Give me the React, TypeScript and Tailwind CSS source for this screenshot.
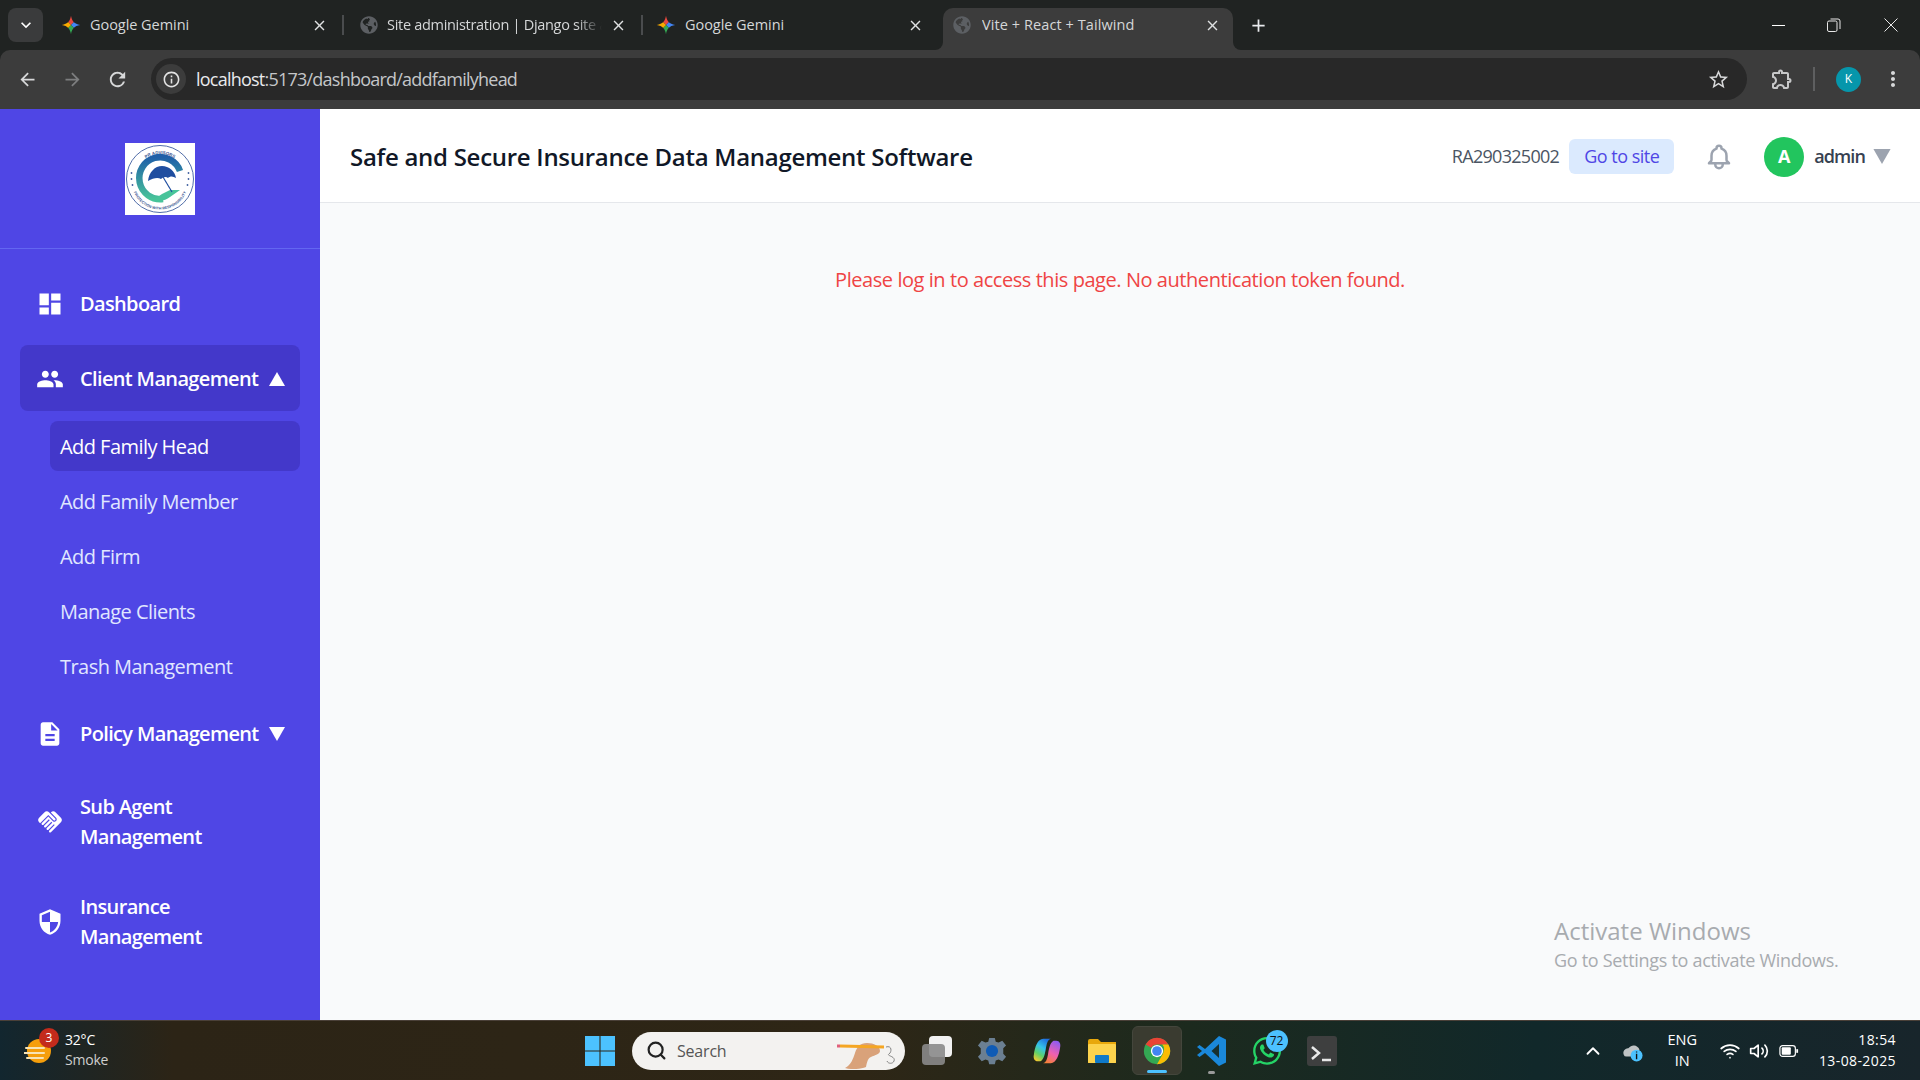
import { FaGlobeAmericas, FaWhatsapp } from 'react-icons/fa'
import {
  MdArrowBack,
  MdArrowForward,
  MdClose,
  MdDashboard,
  MdDescription,
  MdOutlineExtension,
  MdHandshake,
  MdInfoOutline,
  MdKeyboardArrowDown,
  MdMoreVert,
  MdOutlineStarBorder,
  MdPeople,
  MdRefresh,
  MdSecurity,
  MdAdd,
} from 'react-icons/md'
import { HiOutlineBell } from 'react-icons/hi'
import { FiSearch, FiChevronUp, FiWifi, FiVolume2 } from 'react-icons/fi'

const sans = 'font-["Open_Sans",sans-serif]'

const GeminiStar = ({ id }: { id: string }) => (
  <svg viewBox="0 0 24 24" className="h-5 w-5 shrink-0">
    <defs>
      <clipPath id={id}>
        <path d="M12 1c1 6 4 10 11 11-7 1-10 5-11 11-1-6-4-10-11-11 7-1 10-5 11-11z" />
      </clipPath>
    </defs>
    <g clipPath={`url(#${id})`}>
      <path d="M12 12L0 0h24z" fill="#e8483f" />
      <path d="M12 12L24 0v24z" fill="#4285f4" />
      <path d="M12 12l12 12H0z" fill="#34a853" />
      <path d="M12 12L0 24V0z" fill="#f9ab00" />
    </g>
  </svg>
)

const Globe = () => <FaGlobeAmericas className="h-[18px] w-[18px] shrink-0 text-[#5c5f63]" />

type TabProps = { icon: React.ReactNode; title: string; fade?: boolean; className: string; titleClass?: string }

const Tab = ({ icon, title, fade, className, titleClass = 'ml-[9px] tracking-[-0.05px]' }: TabProps) => (
  <div className={`flex h-full items-center pb-2 ${className}`}>
    {icon}
    <span className={`flex-1 overflow-hidden whitespace-nowrap text-[14.5px] text-[#d5d7d8] ${titleClass} ${fade ? '[mask-image:linear-gradient(to_right,black_88%,transparent)]' : ''}`}>
      {title}
    </span>
    <MdClose className="ml-2 h-[17px] w-[17px] shrink-0 text-[#dfe1e2]" />
  </div>
)

const ChromeBar = () => (
  <>
    <div className="flex h-[50px] items-end bg-[#202322] pl-2">
      <div className="mb-2 flex h-[34px] w-[35px] items-center justify-center rounded-lg bg-[#3a3b3c]">
        <MdKeyboardArrowDown className="h-5 w-5 text-white" />
      </div>
      <div className="flex h-[42px] items-center">
        <div className="ml-[2px] h-full">
          <Tab icon={<GeminiStar id="g1" />} title="Google Gemini" className="w-[297px] pl-4 pr-[14px]" />
        </div>
        <div className="mb-2 h-5 w-[2px] bg-[#4a4c4e]" />
        <Tab icon={<Globe />} title="Site administration | Django site admin" titleClass="ml-[9px] tracking-[-0.3px]" fade className="w-[297px] pl-4 pr-[14px]" />
        <div className="mb-2 h-5 w-[2px] bg-[#4a4c4e]" />
        <Tab icon={<GeminiStar id="g2" />} title="Google Gemini" className="w-[300px] pl-[13px] pr-[19px]" />
        <div className="relative h-full w-[290px] rounded-t-[10px] bg-[#3c3c3c]">
          <span className="absolute -left-2 bottom-0 h-2 w-2 bg-[#3c3c3c]">
            <span className="block h-full w-full rounded-br-lg bg-[#202322]" />
          </span>
          <span className="absolute -right-2 bottom-0 h-2 w-2 bg-[#3c3c3c]">
            <span className="block h-full w-full rounded-bl-lg bg-[#202322]" />
          </span>
          <Tab icon={<Globe />} title="Vite + React + Tailwind" titleClass="ml-[11px] tracking-[0.08px]" className="w-full pl-[10px] pr-[12px]" />
        </div>
        <MdAdd className="mb-2 ml-[15px] h-[21px] w-[21px] text-[#e8eaed]" />
      </div>
      <div className="ml-auto flex h-full items-center pr-[22px] text-[#e8e8e8]">
        <div className="h-px w-[13px] bg-white" />
        <svg viewBox="0 0 14 14" className="ml-[42px] h-[14px] w-[14px]" fill="none" stroke="currentColor">
          <rect x="0.5" y="3" width="9.5" height="10.5" rx="1.5" />
          <path d="M3.5 1h7.5a2 2 0 0 1 2 2v8" />
        </svg>
        <svg viewBox="0 0 14 14" className="ml-[43px] h-[14px] w-[14px]" fill="none" stroke="currentColor">
          <path d="M.5.5l13 13M13.5.5l-13 13" />
        </svg>
      </div>
    </div>
    <div className="flex h-[59px] items-center rounded-t-[10px] bg-[#3c3c3c] pl-[17px] pr-[15px] pb-[1px]">
      <MdArrowBack className="h-[21px] w-[21px] text-[#d7d8d9]" />
      <MdArrowForward className="ml-6 h-[21px] w-[21px] text-[#7d7e7f]" />
      <MdRefresh className="ml-[23px] h-[23px] w-[23px] text-[#d7d8d9]" />
      <div className="ml-[22px] flex h-[42px] flex-1 items-center rounded-full bg-[#282828] pl-[5px] pr-[17px]">
        <div className="flex h-[30px] w-[30px] items-center justify-center rounded-full bg-[#3c3c3c]">
          <MdInfoOutline className="h-[19px] w-[19px] text-[#e3e3e3]" />
        </div>
        <span className="ml-[10px] text-[18px] tracking-[-0.77px] text-[#e8eaed]">
          localhost<span className="text-[#c4c6c8]">:5173/dashboard/addfamilyhead</span>
        </span>
        <MdOutlineStarBorder className="ml-auto h-[23px] w-[23px] text-[#d7d8d9]" />
      </div>
      <MdOutlineExtension className="ml-[23px] h-[24px] w-[24px] text-[#c7c8c9]" />
      <div className="ml-[19px] h-6 w-[2px] bg-[#5e5f60]" />
      <div className="ml-[21px] flex h-[25px] w-[25px] items-center justify-center rounded-full bg-[#0696ab] text-[12px] text-white">K</div>
      <MdMoreVert className="ml-[20px] h-6 w-6 text-[#d7d8d9]" />
    </div>
  </>
)

const Logo = () => (
  <svg viewBox="0 0 70 72" className="h-[72px] w-[70px] bg-white">
    <defs>
      <linearGradient id="ring" x1="0" y1="0" x2="0" y2="1">
        <stop offset="0" stopColor="#1f5fa8" />
        <stop offset="1" stopColor="#48c49a" />
      </linearGradient>
      <path id="arcTop" d="M10 36a25 25 0 0 1 50 0" />
      <path id="arcBottom" d="M6.500 38a28.500 28.500 0 0 0 57 0" />
    </defs>
    <circle cx="35" cy="36" r="33.500" fill="none" stroke="#3f5f9f" strokeWidth="0.9" />
    <text fontSize="4.4" fontWeight="700" fill="#3a5590" fontFamily="Liberation Sans, sans-serif">
      <textPath href="#arcTop" startOffset="50%" textAnchor="middle">PR ADVISORS</textPath>
    </text>
    <text fontSize="3.7" fontWeight="700" fill="#3a5590" fontFamily="Liberation Sans, sans-serif">
      <textPath href="#arcBottom" startOffset="50%" textAnchor="middle">PROTECTION WITH RESPONSIBILITY</textPath>
    </text>
    <path d="M55 28a21 21 0 1 0-17 28" fill="none" stroke="url(#ring)" strokeWidth="6.500" />
    <path d="M28 57c8 2 13 0 17-3l10-7-10 0-8 4z" fill="#48c49a" />
    <path d="M23 38c1-9 7-15 14-15 7 0 13 5 14 12-3-2-6-2-8 0-2-2-5-1-7 1-3-2-8-1-13 2z" fill="#1f4ea0" />
    <path d="M38 34l9 15" stroke="#1f4ea0" strokeWidth="1.200" />
    <g fill="#3f5f9f">
      <circle cx="6.500" cy="30" r="0.9" /><circle cx="6.500" cy="36" r="0.9" /><circle cx="7.500" cy="42" r="0.9" />
      <circle cx="63.500" cy="30" r="0.9" /><circle cx="63.500" cy="36" r="0.9" /><circle cx="62.500" cy="42" r="0.9" />
    </g>
  </svg>
)

const TriUp = () => (
  <svg viewBox="0 0 16 14" className="h-[14px] w-4 fill-white"><path d="M8 0l8 14H0z" /></svg>
)
const TriDown = ({ className = 'h-[14px] w-4 fill-white' }: { className?: string }) => (
  <svg viewBox="0 0 16 14" className={className}><path d="M0 0h16L8 14z" /></svg>
)

const subItems = ['Add Family Head', 'Add Family Member', 'Add Firm', 'Manage Clients', 'Trash Management']

type NavRowProps = { icon: React.ReactNode; label: React.ReactNode; trail?: React.ReactNode; active?: boolean; pad?: string }

const NavRow = ({ icon, label, trail, active, pad = 'pt-[19px] pb-[17px]' }: NavRowProps) => (
  <div className={`flex items-center rounded-lg pl-4 pr-[15px] ${pad} ${active ? 'bg-[#4338ca]' : ''}`}>
    <span className="flex w-7 shrink-0 justify-center">{icon}</span>
    <span className="ml-[16px] flex-1 text-[20px] font-semibold leading-[30px] tracking-[-0.65px] text-white">{label}</span>
    {trail}
  </div>
)

const Sidebar = () => (
  <aside className="flex w-[320px] shrink-0 flex-col bg-[#4f46e5]">
    <div className="flex h-[140px] items-start justify-center border-b border-[#6366f1] pt-[34px]">
      <Logo />
    </div>
    <nav className="flex flex-col gap-2 px-5 pt-[22px]">
      <NavRow icon={<MdDashboard className="h-7 w-7 text-white" />} label="Dashboard" pad="py-[18px]" />
      <div>
        <NavRow active icon={<MdPeople className="h-7 w-7 text-white" />} label="Client Management" trail={<TriUp />} />
        <ul className="ml-[30px] mt-[10px] flex flex-col gap-[5px]">
          {subItems.map((s, i) => (
            <li key={s} className={`flex h-[50px] items-center rounded-lg px-[10px] pt-[2px] text-[20px] tracking-[-0.55px] ${i === 0 ? 'bg-[#4338ca] text-white' : 'text-[#e0e7ff]'}`}>
              {s}
            </li>
          ))}
        </ul>
        <div className="h-[2px]" />
      </div>
      <NavRow icon={<MdDescription className="h-7 w-7 text-white" />} label="Policy Management" trail={<TriDown />} pad="py-[18px]" />
      <NavRow icon={<MdHandshake className="h-7 w-7 text-white" />} label={<>Sub Agent<br />Management</>} pad="pt-[17px] pb-[15px]" />
      <NavRow icon={<MdSecurity className="h-7 w-7 text-white" />} label={<>Insurance<br />Management</>} pad="pt-[17px] pb-[15px]" />
    </nav>
  </aside>
)

const Header = () => (
  <header className="flex h-[94px] items-center border-b border-gray-200 bg-white pl-[30px] pr-[29px] pt-[2px]">
    <h1 className="text-[24px] font-semibold tracking-[-0.28px] text-[#111827]">Safe and Secure Insurance Data Management Software</h1>
    <span className="ml-auto text-[18px] tracking-[-0.7px] text-[#4b5563]">RA290325002</span>
    <button className="ml-[10px] flex h-[35px] w-[105px] items-center justify-center rounded-md bg-[#dbeafe] text-[18px] tracking-[-0.5px] text-[#4f46e5]">Go to site</button>
    <HiOutlineBell className="ml-[30px] h-[30px] w-[30px] text-[#9ca3af]" />
    <div className="ml-[30px] flex h-10 w-10 items-center justify-center rounded-full bg-[#22c55e] text-[18px] font-bold text-white">A</div>
    <span className="ml-[10px] text-[18px] font-semibold tracking-[-0.9px] text-[#374151]">admin</span>
    <TriDown className="ml-[8px] h-[15px] w-[18px] fill-[#9ca3af]" />
  </header>
)

const ChromeIcon = () => (
  <svg viewBox="0 0 32 32" className="h-7 w-7">
    <circle cx="16" cy="16" r="15" fill="#34a853" />
    <path d="M16 1a15 15 0 0 1 13 7.5H16a7.5 7.5 0 0 0-6.5 3.8L3 8.5A15 15 0 0 1 16 1z" fill="#ea4335" />
    <path d="M29 8.500a15 15 0 0 1-13 22.500l6.500-11.200A7.500 7.500 0 0 0 23.500 16 7.500 7.500 0 0 0 22 8.500z" fill="#fbbc04" />
    <circle cx="16" cy="16" r="7" fill="#fff" />
    <circle cx="16" cy="16" r="5.500" fill="#4285f4" />
  </svg>
)

const TaskIcon = ({ children }: { children: React.ReactNode }) => (
  <div className="relative flex h-[49px] w-[55px] items-center justify-center">{children}</div>
)

const Taskbar = () => (
  <footer className={`flex h-[60px] items-center border-t border-[#4a4038] bg-[linear-gradient(90deg,#12262f_0%,#2c2416_9%,#2e2616_45%,#1c2a1e_62%,#11282a_80%,#18252b_100%)] text-white ${sans}`}>
    <div className="relative flex w-[585px] shrink-0 items-center pl-[24px]">
      <svg viewBox="0 0 28 28" className="h-7 w-7">
        <circle cx="15" cy="14" r="12" fill="#f59e0b" />
        <path d="M2 11h18M0 16h20M3 21h16" stroke="#f7e3b5" strokeWidth="2" strokeLinecap="round" />
      </svg>
      <span className="absolute left-[39px] top-[-2px] flex h-5 w-5 items-center justify-center rounded-full bg-[#c42b1c] text-[12px] text-white">3</span>
      <div className="ml-[13px] pb-[2px] text-[14px] leading-[20px] tracking-[-0.2px]">
        <div>32°C</div>
        <div className="text-[#cfcfcf]">Smoke</div>
      </div>
    </div>
    <svg viewBox="0 0 28 28" className="h-[30px] w-[30px]">
      <path d="M0 0h13.500v13.500H0zM14.500 0H28v13.500H14.500zM0 14.500h13.500V28H0zM14.500 14.500H28V28H14.500z" fill="#4cc2ff" />
    </svg>
    <div className="relative ml-[17px] flex h-[38px] w-[273px] items-center rounded-full bg-[#f3f2f0] pl-[14px] text-[#333]">
      <FiSearch className="h-[21px] w-[21px] text-[#222]" strokeWidth={2.5} />
      <span className="ml-[10px] text-[16px] tracking-[-0.2px] text-[#555]">Search</span>
      <svg viewBox="0 0 64 32" className="absolute right-[5px] top-[5px] h-8 w-16">
        <path d="M9 31c6-3 8-9 10-15 2-6 5-10 12-10 7 0 13 3 13 8 0 3-5 4-9 6-3 1-4 5-5 10-5 2-14 3-21 1z" fill="#d9a27a" />
        <path d="M4 9l44 1" stroke="#f5a623" strokeWidth="3" />
        <path d="M4 9h-3" stroke="#e0607a" strokeWidth="3" />
        <path d="M50 10c6-2 6 5 3 7s7 2 5 7c-1 3-6 3-7 0" fill="none" stroke="#7a7a7a" strokeWidth="0.9" />
      </svg>
    </div>
    <div className="ml-[4px] flex items-center">
      <TaskIcon>
        <div className="relative h-[30px] w-[30px]">
          <span className="absolute left-[7px] top-0 h-[21px] w-[23px] rounded-sm bg-[#f1f1f1]" />
          <span className="absolute left-0 top-[8px] h-[21px] w-[23px] rounded-sm bg-[#8a8a8a]/90" />
        </div>
      </TaskIcon>
      <TaskIcon>
        <svg viewBox="0 0 32 32" className="h-[30px] w-[30px]">
          <path d="M13 2h6l1 4 3 1 4-2 4 5-3 3v6l3 3-4 5-4-2-3 1-1 4h-6l-1-4-3-1-4 2-4-5 3-3v-6l-3-3 4-5 4 2 3-1z" fill="#6b7f92" />
          <circle cx="16" cy="16" r="6.500" fill="#0f5bb5" />
        </svg>
      </TaskIcon>
      <TaskIcon>
        <svg viewBox="0 0 32 32" className="h-[30px] w-[30px]">
          <defs>
            <linearGradient id="cpl" x1="0.700" y1="0" x2="0.200" y2="1">
              <stop offset="0" stopColor="#1f6fe0" />
              <stop offset="0.4" stopColor="#35c4e8" />
              <stop offset="0.7" stopColor="#5fd06a" />
              <stop offset="1" stopColor="#f5c92e" />
            </linearGradient>
            <linearGradient id="cpr" x1="0.700" y1="0" x2="0.300" y2="1">
              <stop offset="0" stopColor="#8f5cf0" />
              <stop offset="0.55" stopColor="#f060b0" />
              <stop offset="1" stopColor="#f5803a" />
            </linearGradient>
          </defs>
          <path d="M12 3h8c-3 1-4 4-5 9-1 6-2 13-6 15H6c-3 0-5-3-4-7 1-8 4-17 10-17z" fill="url(#cpl)" />
          <path d="M20 29h-8c3-1 4-4 5-9 1-6 2-13 6-15h3c3 0 5 3 4 7-1 8-4 17-10 17z" fill="url(#cpr)" />
        </svg>
      </TaskIcon>
      <TaskIcon>
        <svg viewBox="0 0 32 32" className="h-[32px] w-[32px]">
          <path d="M2 6a2 2 0 0 1 2-2h8l3 3h15v21H2z" fill="#e8a80c" />
          <rect x="2" y="9" width="28" height="19" rx="1" fill="#fcd34d" />
          <rect x="9" y="20" width="14" height="8" rx="1" fill="#0f7ac9" />
        </svg>
      </TaskIcon>
      <TaskIcon>
        <div className="relative flex h-[49px] w-[50px] items-center justify-center rounded-md border border-[#44463c] bg-[#3a3b30]">
          <ChromeIcon />
          <span className="absolute bottom-[1px] h-[3px] w-5 rounded-full bg-[#4cc2ff]" />
        </div>
      </TaskIcon>
      <TaskIcon>
        <svg viewBox="0 0 32 32" className="h-[32px] w-[32px]">
          <path d="M23 1l7 3.500v23L23 31 9 18l-5.500 4L1 20l5-4-5-4 2.500-2L9 14z" fill="#1a88da" />
          <path d="M23 9l-7.500 7 7.500 7z" fill="#17302f" />
        </svg>
        <span className="absolute bottom-[1px] h-[3px] w-[7px] rounded-full bg-[#9a9a9a]" />
      </TaskIcon>
      <TaskIcon>
        <div className="relative">
          <FaWhatsapp className="h-[32px] w-[32px] text-[#25d366]" />
          <span className="absolute -right-[5px] -top-[5px] flex h-[22px] w-[22px] items-center justify-center rounded-full bg-[#4cc2ff] text-[12px] text-[#111]">72</span>
        </div>
      </TaskIcon>
      <TaskIcon>
        <div className="flex h-[30px] w-[30px] items-start rounded-[3px] bg-[#3e3f3f] pt-[4px]">
          <svg viewBox="0 0 30 26" className="h-[26px] w-[30px]" fill="none" stroke="#e8e8e8" strokeWidth="2.500">
            <path d="M5 7l7 6-7 6M15 20h9" />
          </svg>
        </div>
      </TaskIcon>
    </div>
    <div className="ml-auto flex items-center pr-6">
      <FiChevronUp className="h-[22px] w-[22px] text-white" />
      <svg viewBox="0 0 24 24" className="ml-[17px] h-[22px] w-[22px]">
        <path d="M3 16a5 5 0 0 1 5-7 7 7 0 0 1 12 1v8H6a3 3 0 0 1-3-2z" fill="#bfc3c4" />
        <circle cx="17" cy="17" r="6.500" fill="#4cc2ff" />
        <path d="M17 15v6M17 12.500v1" stroke="#111" strokeWidth="1.500" />
      </svg>
      <div className="ml-[24px] pb-[2px] text-center text-[14.5px] leading-[21px]">
        <div>ENG</div>
        <div>IN</div>
      </div>
      <FiWifi className="ml-[23px] h-5 w-5 text-white" />
      <FiVolume2 className="ml-[9px] h-5 w-5 text-white" />
      <svg viewBox="0 0 22 14" className="ml-[10px] h-[14px] w-[20px]" fill="none" stroke="#fff" strokeWidth="1.300">
        <rect x="1" y="1" width="17" height="12" rx="3" />
        <rect x="3" y="3" width="10" height="8" rx="1" fill="#fff" stroke="none" />
        <path d="M20 5v4" strokeWidth="2" />
      </svg>
      <div className="ml-[20px] pb-[2px] text-right text-[14px] leading-[21px] tracking-[0.4px]">
        <div>18:54</div>
        <div>13-08-2025</div>
      </div>
    </div>
  </footer>
)

export default function App() {
  return (
    <div className={`flex h-screen w-screen flex-col overflow-hidden bg-[#202322] ${sans}`}>
      <ChromeBar />
      <div className="relative flex min-h-0 flex-1">
        <Sidebar />
        <main className="flex flex-1 flex-col bg-[#f9fafb]">
          <Header />
          <p className="pt-[62px] text-center text-[20px] leading-[30px] tracking-[-0.44px] text-[#ef4444]">
            Please log in to access this page. No authentication token found.
          </p>
        </main>
        <div className="absolute left-[1554px] top-[805px] text-[#a8abaf]">
          <div className="text-[24px] leading-[34px] tracking-[0px]">Activate Windows</div>
          <div className="text-[18px] leading-[24px] tracking-[-0.3px]">Go to Settings to activate Windows.</div>
        </div>
      </div>
      <Taskbar />
    </div>
  )
}
